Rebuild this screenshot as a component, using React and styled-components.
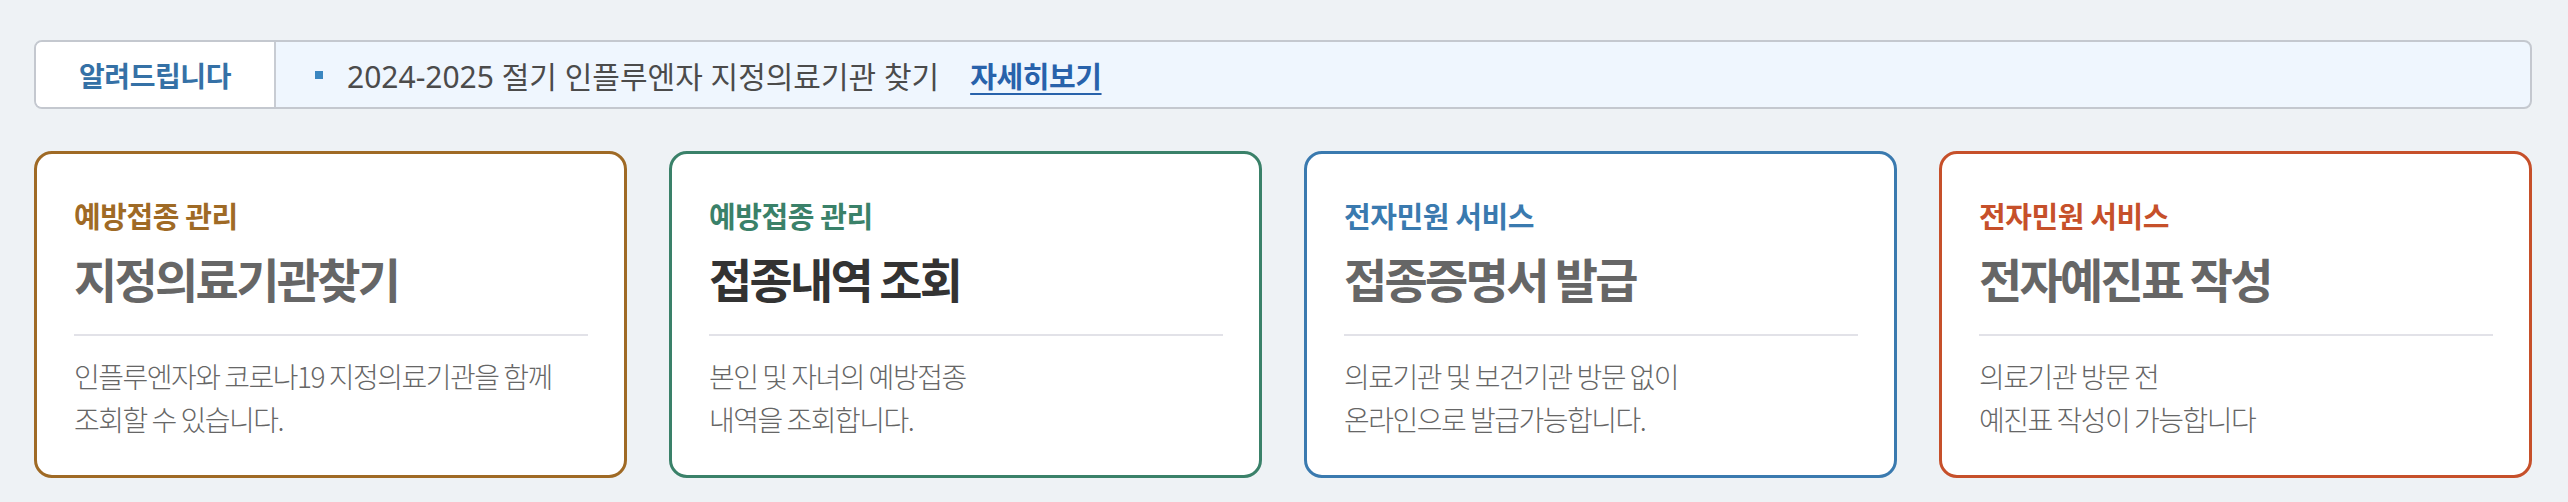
import styled, { createGlobalStyle } from "styled-components";

const GlobalStyle = createGlobalStyle`
  html, body {
    margin: 0;
    padding: 0;
    background: #eef2f5;
  }
  body {
    font-family: "Noto Sans", "Noto Sans CJK KR", sans-serif;
  }
  * { box-sizing: border-box; }
`;

const cards = [
  {
    color: "#9f6a25",
    category: "예방접종 관리",
    title: "지정의료기관찾기",
    titleColor: "#666666",
    desc: ["인플루엔자와 코로나19 지정의료기관을 함께", "조회할 수 있습니다."],
  },
  {
    color: "#3a8169",
    category: "예방접종 관리",
    title: "접종내역 조회",
    titleColor: "#333333",
    desc: ["본인 및 자녀의 예방접종", "내역을 조회합니다."],
  },
  {
    color: "#3a7aaf",
    category: "전자민원 서비스",
    title: "접종증명서 발급",
    titleColor: "#666666",
    desc: ["의료기관 및 보건기관 방문 없이", "온라인으로 발급가능합니다."],
  },
  {
    color: "#c6502a",
    category: "전자민원 서비스",
    title: "전자예진표 작성",
    titleColor: "#666666",
    desc: ["의료기관 방문 전", "예진표 작성이 가능합니다"],
  },
];

export default function App() {
  return (
    <>
      <GlobalStyle />
      <Page>
        <Notice>
          <NoticeLabel>알려드립니다</NoticeLabel>
          <NoticeBody>
            <Bullet />
            <NoticeText>2024-2025 절기 인플루엔자 지정의료기관 찾기</NoticeText>
            <MoreLink href="#">자세히보기</MoreLink>
          </NoticeBody>
        </Notice>
        <CardGrid>
          {cards.map((c) => (
            <Card key={c.title} $color={c.color}>
              <Category $color={c.color}>{c.category}</Category>
              <Title $color={c.titleColor}>{c.title}</Title>
              <Divider />
              <Desc>
                {c.desc.map((line) => (
                  <span key={line}>{line}</span>
                ))}
              </Desc>
            </Card>
          ))}
        </CardGrid>
      </Page>
    </>
  );
}

const Page = styled.div`
  padding: 40px 36px 24px 34px;
  display: flex;
  flex-direction: column;
  gap: 42px;
`;

const Notice = styled.div`
  display: flex;
  height: 69px;
  border: 2px solid #c4c8cf;
  border-radius: 8px;
  overflow: hidden;
  background: #eff6fe;
`;

const NoticeLabel = styled.div`
  width: 240px;
  flex-shrink: 0;
  display: flex;
  align-items: center;
  justify-content: center;
  background: #ffffff;
  border-right: 2px solid #c8ccd3;
  color: #3571a6;
  font-family: "Noto Sans CJK KR", sans-serif;
  font-size: 28px;
  font-weight: 700;
  letter-spacing: -0.4px;
`;

const NoticeBody = styled.div`
  flex: 1;
  display: flex;
  align-items: center;
  padding-left: 39px;
`;

const Bullet = styled.span`
  width: 8px;
  height: 8px;
  background: #3a86c0;
  margin-right: 24px;
`;

const NoticeText = styled.span`
  color: #4b4b4b;
  font-family: "Noto Sans", "Noto Sans CJK KR", sans-serif;
  font-size: 30px;
  letter-spacing: 0;
`;

const MoreLink = styled.a`
  margin-left: 31px;
  color: #2862ab;
  font-family: "Noto Sans CJK KR", sans-serif;
  font-size: 29px;
  font-weight: 700;
  letter-spacing: -0.4px;
  text-decoration: underline;
  text-underline-offset: 5px;
  text-decoration-thickness: 2px;
`;

const CardGrid = styled.div`
  display: grid;
  grid-template-columns: repeat(4, 1fr);
  gap: 42px;
`;

const Card = styled.div`
  background: #ffffff;
  border: 3px solid ${(p) => p.$color};
  border-radius: 18px;
  padding: 45px 36px 34px 37px;
  display: flex;
  flex-direction: column;
  font-family: "Noto Sans CJK KR", sans-serif;
`;

const Category = styled.div`
  color: ${(p) => p.$color};
  font-size: 29px;
  line-height: 32px;
  font-weight: 700;
  letter-spacing: -0.4px;
`;

const Title = styled.div`
  margin-top: 20px;
  color: ${(p) => p.$color};
  font-size: 47px;
  line-height: 53px;
  font-weight: 700;
  letter-spacing: -2.7px;
`;

const Divider = styled.div`
  margin-top: 30px;
  height: 2px;
  background: #e2e2e8;
`;

const Desc = styled.div`
  margin-top: 19px;
  display: flex;
  flex-direction: column;
  color: #666666;
  font-size: 28px;
  line-height: 43px;
  font-weight: 300;
  letter-spacing: -1.5px;
`;
